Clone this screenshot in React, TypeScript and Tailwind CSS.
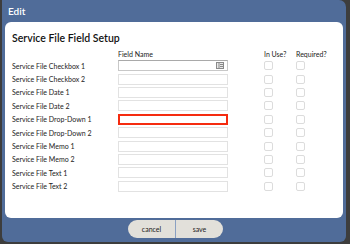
import React from "react";

const rows = [
  "Service File Checkbox 1",
  "Service File Checkbox 2",
  "Service File Date 1",
  "Service File Date 2",
  "Service File Drop-Down 1",
  "Service File Drop-Down 2",
  "Service File Memo 1",
  "Service File Memo 2",
  "Service File Text 1",
  "Service File Text 2",
];

function Box() {
  return <div className="w-[9px] h-[9px] rounded-[2px] border border-[#dcdcdc] bg-white" />;
}

export default function App() {
  return (
    <div
      className="w-[350px] h-[244px] bg-[#3d3d3d] overflow-hidden"
      style={{ fontFamily: "Lato, 'Open Sans', sans-serif" }}
    >
      <div className="ml-[2px] w-[344px] h-[242px] bg-[#506c99] rounded-tr-[7px] rounded-b-[6px] flex flex-col">
        <div className="h-[22px] flex items-center pl-[6px] text-white text-[10px] font-semibold">Edit</div>
        <div className="mx-[3px] h-[196px] bg-white rounded-[6px] flex flex-col pl-[7px] pt-[9px]">
          <div className="text-[10.5px] font-semibold text-[#111] leading-[14px]">Service File Field Setup</div>
          <div className="flex text-[7px] text-[#222] mt-[5px] leading-[8px]">
            <div className="w-[106px]" />
            <div className="w-[146px]">Field Name</div>
            <div className="w-[32px]">In Use?</div>
            <div>Required?</div>
          </div>
          <div className="flex flex-col mt-[1px]">
            {rows.map((r, i) => (
              <div key={r} className="flex items-center h-[13.4px]">
                <div className="w-[106px] text-[7px] text-[#222] leading-[8px]">{r}</div>
                <div
                  className={
                    i === 4
                      ? "w-[110px] h-[11px] border-2 border-[#f52b0f] bg-white"
                      : i === 0
                      ? "w-[110px] h-[11px] border border-[#c8c8c8] border-t-[#a9a9a9] bg-white flex items-center justify-end pr-[3px]"
                      : "w-[110px] h-[11px] border border-[#e2e2e2] bg-white"
                  }
                >
                  {i === 0 && (
                    <svg width="8" height="7" viewBox="0 0 8 7">
                      <rect x="0.5" y="0.5" width="7" height="6" fill="#e8e8e8" stroke="#8a8a8a" />
                      <line x1="3" y1="1" x2="3" y2="6" stroke="#8a8a8a" />
                      <line x1="4" y1="2.5" x2="7" y2="2.5" stroke="#8a8a8a" />
                      <line x1="4" y1="4.5" x2="7" y2="4.5" stroke="#8a8a8a" />
                    </svg>
                  )}
                </div>
                <div className="w-[36px]" />
                <div className="w-[32px]">
                  <Box />
                </div>
                <Box />
              </div>
            ))}
          </div>
        </div>
        <div className="flex justify-center mt-[2px] pl-[3px]">
          <div className="flex h-[18px] rounded-[9px] overflow-hidden bg-[#e2e0da] text-[7px] text-[#222]">
            <div className="w-[47px] flex items-center justify-center">cancel</div>
            <div className="w-[1px] bg-[#8aa0c2]" />
            <div className="w-[47px] flex items-center justify-center">save</div>
          </div>
        </div>
      </div>
    </div>
  );
}
